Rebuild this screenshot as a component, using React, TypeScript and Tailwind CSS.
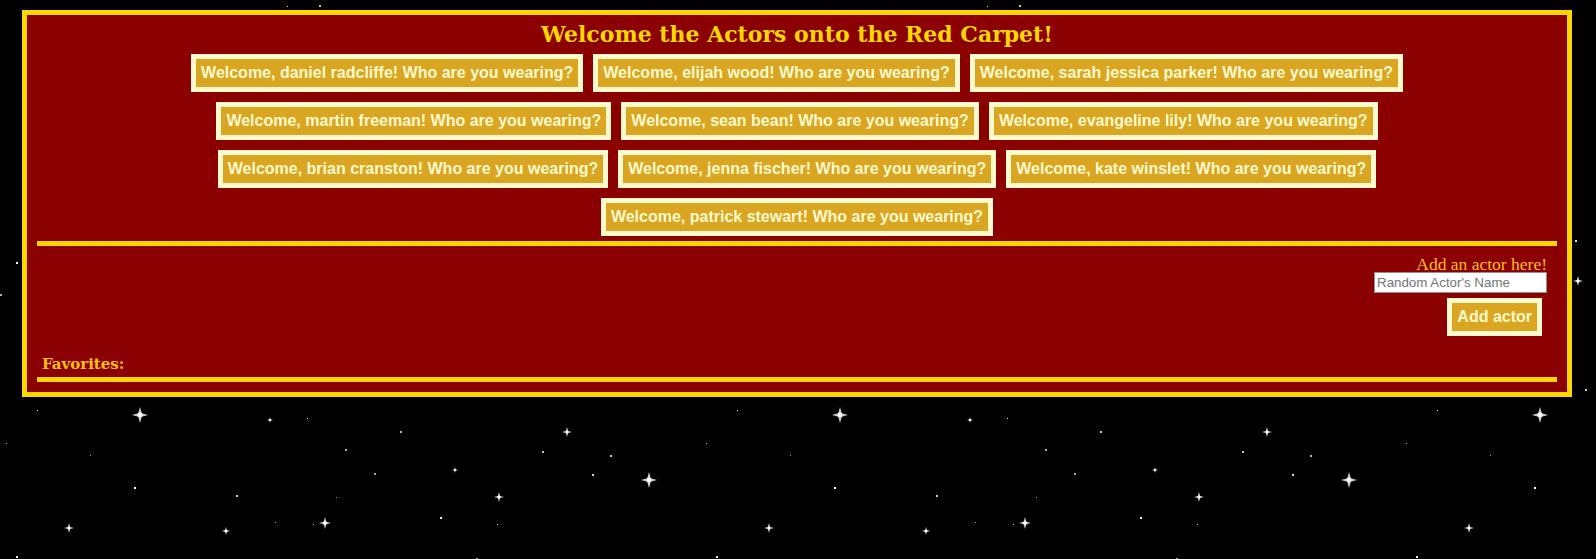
import React, { useState } from 'react'

const actors = [
    'daniel radcliffe',
    'elijah wood',
    'sarah jessica parker',
    'martin freeman',
    'sean bean',
    'evangeline lily',
    'brian cranston',
    'jenna fischer',
    'kate winslet',
    'patrick stewart',
]

// little seeded random so the sky is the same every time
function makeRandom(seed: number) {
    let s = seed
    return () => {
        s = (s * 16807) % 2147483647
        return (s - 1) / 2147483646
    }
}

const sparkles = [
    { x: 140, y: 415, r: 8 },
    { x: 567, y: 432, r: 5 },
    { x: 649, y: 480, r: 8 },
    { x: 499, y: 497, r: 5 },
    { x: 325, y: 523, r: 6 },
    { x: 69, y: 528, r: 5 },
    { x: 226, y: 531, r: 4 },
    { x: 178, y: 281, r: 5 },
    { x: 270, y: 420, r: 3 },
    { x: 455, y: 470, r: 3 },
]

function Sparkle({ x, y, r }: { x: number, y: number, r: number }) {
    const w = r / 4.5
    return (
        <g transform={`translate(${x},${y})`}>
            <path
                d={`M0,${-r} L${w},${-w} L${r},0 L${w},${w} L0,${r} L${-w},${w} L${-r},0 L${-w},${-w} Z`}
                fill="#ffffff"
                opacity={0.8}
            />
            <circle r={w * 1.4} fill="#ffffff" />
        </g>
    )
}

function StarSky() {
    const rand = makeRandom(42)
    const dots = Array.from({ length: 80 }, () => ({
        x: Math.round(rand() * 700),
        y: Math.round(rand() * 560),
        s: rand() > 0.6 ? 2 : 1,
        o: 0.6 + rand() * 0.4,
    }))

    return (
        <svg className="absolute inset-0 w-full h-full" xmlns="http://www.w3.org/2000/svg">
            <defs>
                <pattern id="sky" width="700" height="560" patternUnits="userSpaceOnUse">
                    {dots.map((d, i) => (
                        <rect key={i} x={d.x} y={d.y} width={d.s} height={d.s} fill="#ffffff" opacity={d.o} />
                    ))}
                    {sparkles.map((s, i) => (
                        <Sparkle key={i} {...s} />
                    ))}
                </pattern>
            </defs>
            <rect width="100%" height="100%" fill="url(#sky)" />
        </svg>
    )
}

function WelcomeButton({ children }: { children: React.ReactNode }) {
    return (
        <button className="border-[5px] border-[#fffacd] bg-[#daa520] px-[5px] h-[38px] font-['Liberation_Sans',Arial,sans-serif] font-bold text-[16px] leading-[18px] text-[#fffacd] whitespace-nowrap">
            {children}
        </button>
    )
}

export default function App() {
    const [name, setName] = useState('')
    const [list, setList] = useState<string[]>(actors)

    const handleAdd = () => {
        if (name.trim()) {
            setList([...list, name.trim()])
            setName('')
        }
    }

    return (
        <div className="relative min-h-screen bg-black overflow-hidden">
            <StarSky />
            <div className="relative pt-[10px] pl-[22px] pr-[24px]">
                <div className="border-[5px] border-[#ffd700] bg-[#8b0000] px-[10px] pb-[10px]">
                    <h1 className="text-center font-['DejaVu_Serif',Georgia,serif] font-bold text-[22px] leading-[39px] text-[#ffd700]">
                        Welcome the Actors onto the Red Carpet!
                    </h1>

                    <div className="flex flex-wrap justify-center gap-[10px]">
                        {list.map((actor) => (
                            <WelcomeButton key={actor}>
                                Welcome, {actor}! Who are you wearing?
                            </WelcomeButton>
                        ))}
                    </div>

                    <div className="h-[5px] bg-[#ffd700] mt-[5px]" />

                    <div className="flex flex-col items-end px-[10px] pt-[10px]">
                        <label htmlFor="actor" className="font-['Liberation_Serif',Georgia,serif] text-[17.5px] leading-[16px] text-[#ffbf1a]">
                            Add an actor here!
                        </label>
                        <input
                            id="actor"
                            type="text"
                            value={name}
                            onChange={(e) => setName(e.target.value)}
                            placeholder="Random Actor's Name"
                            className="w-[173px] h-[21px] border border-[#8f8f8f] bg-white px-[2px] font-['Liberation_Sans',Arial,sans-serif] text-[13.33px] text-black placeholder:text-[#757575] outline-none"
                        />
                        <button
                            onClick={handleAdd}
                            className="m-[5px] border-[5px] border-[#fffacd] bg-[#daa520] px-[5px] h-[38px] font-['Liberation_Sans',Arial,sans-serif] font-bold text-[16px] leading-[18px] text-[#fffacd]"
                        >
                            Add actor
                        </button>
                    </div>

                    <div className="pt-[14px] pb-[4px] pl-[5px] font-['DejaVu_Serif',Georgia,serif] font-bold text-[15px] leading-[18px] text-[#ffc20e]">
                        Favorites:
                    </div>

                    <div className="h-[5px] bg-[#ffd700]" />
                </div>
            </div>
        </div>
    )
}
